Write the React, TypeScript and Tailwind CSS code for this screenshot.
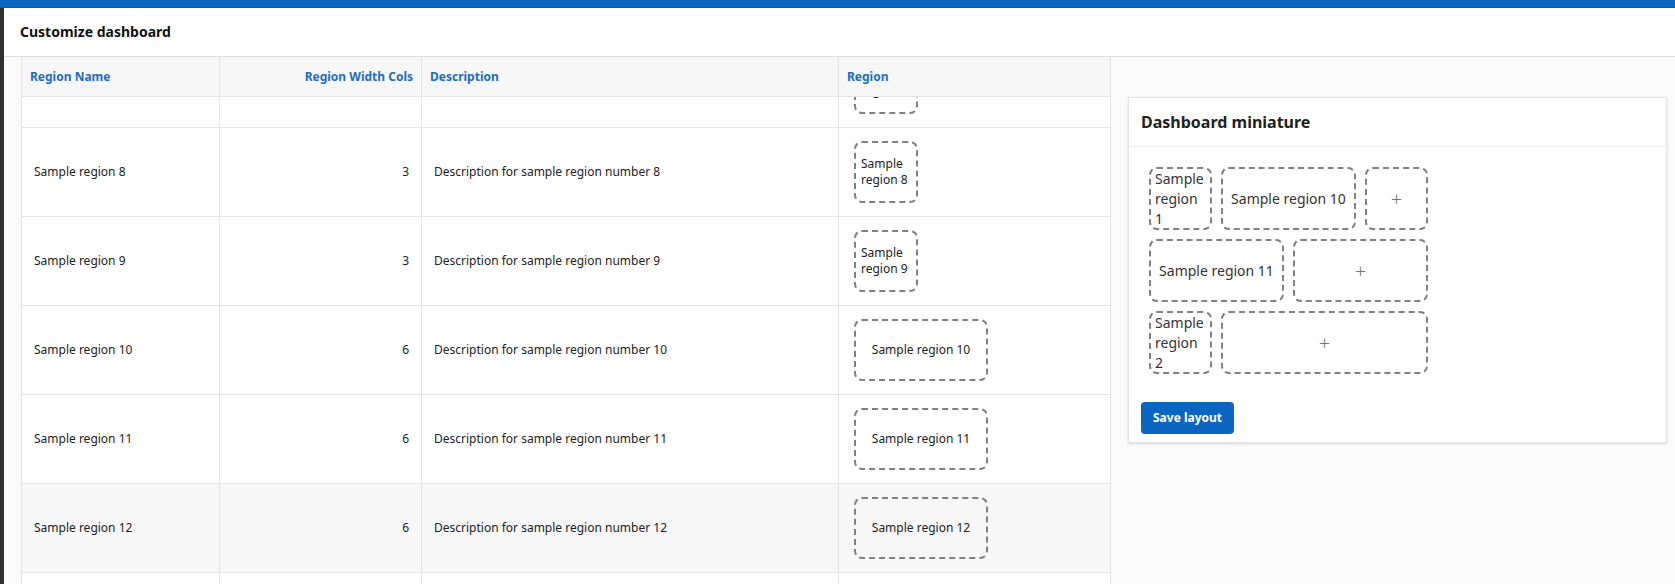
import React from 'react';

type Region = { name: string; cols: number };

// rows as they sit in the scrolled table; region 7 is only partly in view
const regions: Region[] = [
  { name: 'Sample region 8', cols: 3 },
  { name: 'Sample region 9', cols: 3 },
  { name: 'Sample region 10', cols: 6 },
  { name: 'Sample region 11', cols: 6 },
  { name: 'Sample region 12', cols: 6 },
  { name: 'Sample region 13', cols: 6 },
];

const boxWidth: Record<number, string> = {
  3: 'w-[64px]',
  6: 'w-[134px]',
};

const spanClass: Record<number, string> = {
  3: 'col-span-3',
  6: 'col-span-6',
  9: 'col-span-9',
};

// miniature layout, one entry per slot (empty name = free slot)
const miniature: Region[] = [
  { name: 'Sample region 1', cols: 3 },
  { name: 'Sample region 10', cols: 6 },
  { name: '', cols: 3 },
  { name: 'Sample region 11', cols: 6 },
  { name: '', cols: 6 },
  { name: 'Sample region 2', cols: 3 },
  { name: '', cols: 9 },
];

const Cols = () => (
  <colgroup>
    <col className="w-[198px]" />
    <col className="w-[202px]" />
    <col className="w-[417px]" />
    <col className="w-[272px]" />
  </colgroup>
);

const RegionBox = ({ region }: { region: Region }) => (
  <div
    className={`${boxWidth[region.cols]} flex h-[62px] shrink-0 items-center justify-center rounded-lg border-2 border-dashed border-[#808080] px-[5px] text-xs leading-4 text-[#222]`}
  >
    {region.name}
  </div>
);

const cell = 'border border-t-0 border-[#e3e3e3] px-3';

const App = () => {
  return (
    <div className="flex h-[584px] flex-col overflow-hidden bg-white font-['Noto_Sans',sans-serif] text-[#222]">
      <div className="h-2 shrink-0 border-b border-[#0a58a8] bg-[#0b66c3]" />
      <div className="flex min-h-0 flex-1">
        <div className="w-1 shrink-0 bg-[#303030]" />
        <div className="flex min-w-0 flex-1 flex-col">
          <div className="flex h-[49px] shrink-0 items-center border-b border-[#dcdcdc] bg-white pl-4">
            <h1 className="text-sm font-bold text-[#111]">Customize dashboard</h1>
          </div>

          <div className="flex min-h-0 flex-1 bg-[#fbfbfb]">
            {/* Regions table */}
            <div className="ml-[17px] w-[1090px] shrink-0 overflow-hidden bg-white">
              <table className="w-[1090px] table-fixed border-collapse text-left text-xs">
                <Cols />
                <thead>
                  <tr className="bg-[#f7f7f7] font-bold text-[#1c6dc1]">
                    <th className="border-x border-b border-[#e3e3e3] px-2 py-3 leading-[15px]">Region Name</th>
                    <th className="border-x border-b border-[#e3e3e3] px-2 py-3 text-right leading-[15px]">Region Width Cols</th>
                    <th className="border-x border-b border-[#e3e3e3] px-2 py-3 leading-[15px]">Description</th>
                    <th className="border-x border-b border-[#e3e3e3] px-2 py-3 leading-[15px]">Region</th>
                  </tr>
                </thead>
                <tbody>
                  <tr className="bg-white">
                    <td className={cell} />
                    <td className={cell} />
                    <td className={cell} />
                    <td className="border border-t-0 border-[#e3e3e3] px-[15px] pb-[13px] align-bottom">
                      <div className="flex h-[17px] flex-col justify-end overflow-hidden">
                        <RegionBox region={{ name: 'Sample region 7', cols: 3 }} />
                      </div>
                    </td>
                  </tr>
                  {regions.map((r, i) => (
                    <tr key={r.name} className={i === 4 ? 'bg-[#f7f7f7]' : 'bg-white'}>
                      <td className={cell}>{r.name}</td>
                      <td className={`${cell} text-right`}>{r.cols}</td>
                      <td className={cell}>
                        Description for sample region number {r.name.replace('Sample region ', '')}
                      </td>
                      <td className="border border-t-0 border-[#e3e3e3] px-[15px] py-[13px]">
                        <RegionBox region={r} />
                      </td>
                    </tr>
                  ))}
                </tbody>
              </table>
            </div>

            {/* Dashboard miniature */}
            <div className="min-w-0 flex-1 pl-[17px] pr-2 pt-10">
              <div className="border border-[#e3e3e3] bg-white shadow-sm">
                <div className="border-b border-[#ececec] px-3 py-3">
                  <h2 className="text-base leading-6 font-bold text-[#222]">Dashboard miniature</h2>
                </div>
                <div className="px-3 pt-3 pb-2">
                  <div className="p-2">
                    <div className="grid w-[279px] grid-cols-12 gap-[9px]">
                      {miniature.map((m, i) => (
                        <div
                          key={i}
                          className={`${spanClass[m.cols]} flex h-[63px] items-center justify-center rounded-lg border-2 border-dashed border-[#808080] px-1 text-sm leading-5 text-[#333]`}
                        >
                          {m.name ? m.name : <span className="text-xl font-light text-[#777]">+</span>}
                        </div>
                      ))}
                    </div>
                  </div>
                  <button className="mt-5 h-8 rounded-sm bg-[#0b66c3] px-3 text-xs font-bold text-white">
                    Save layout
                  </button>
                </div>
              </div>
            </div>
          </div>
        </div>
      </div>
    </div>
  );
};

export default App;
